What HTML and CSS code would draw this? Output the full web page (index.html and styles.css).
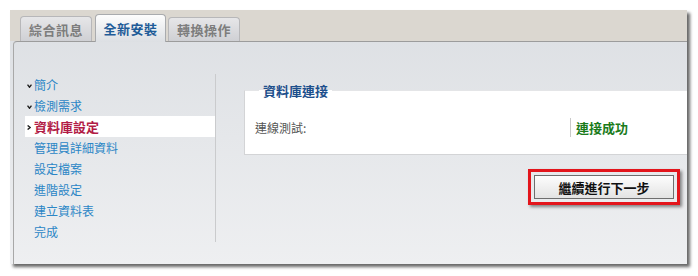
FILE: index.html
```html
<!DOCTYPE html>
<html lang="zh-Hant">
<head>
    <meta charset="UTF-8" />
    <title>安裝精靈</title>
    <link rel="stylesheet" href="styles.css">
</head>
<body>

<!-- ===== Installer window ===== -->
<div class="window">

    <!-- ────────── Tabs ────────── -->
    <div class="tabs">
        <span class="tab">綜合訊息</span>
        <span class="tab active">全新安裝</span>
        <span class="tab">轉換操作</span>
    </div>

    <!-- ────────── Panel ────────── -->
    <div class="panel">
        <ul class="steps">
            <li class="step done"><span class="mark"><svg viewBox="0 0 5 4"><polyline points="0.5,0.6 2.5,3.2 4.5,0.6" /></svg></span>簡介</li>
            <li class="step done"><span class="mark"><svg viewBox="0 0 5 4"><polyline points="0.5,0.6 2.5,3.2 4.5,0.6" /></svg></span>檢測需求</li>
            <li class="step current"><span class="mark"><svg viewBox="0 0 4 5"><polyline points="0.6,0.5 3.2,2.5 0.6,4.5" /></svg></span>資料庫設定</li>
            <li class="step"><span class="mark"></span>管理員詳細資料</li>
            <li class="step"><span class="mark"></span>設定檔案</li>
            <li class="step"><span class="mark"></span>進階設定</li>
            <li class="step"><span class="mark"></span>建立資料表</li>
            <li class="step"><span class="mark"></span>完成</li>
        </ul>

        <div class="content">
            <fieldset class="box">
                <legend>資料庫連接</legend>
                <div class="row">
                    <span class="label">連線測試:</span>
                    <span class="value ok">連接成功</span>
                </div>
            </fieldset>

            <div class="actions">
                <div class="highlight">
                    <button class="btn">繼續進行下一步</button>
                </div>
            </div>
        </div>
    </div>
</div>

</body>
</html>
```

FILE: styles.css
```css
* { box-sizing: border-box; }

body {
    margin: 0;
    background: #fff;
    font-family: "Noto Sans CJK TC", "Noto Sans", sans-serif;
    font-size: 12px;
}

/* ─────────── Window frame ─────────── */
.window{
    margin:10px;
    width:677px;
    height:254px;
    display:flex;
    flex-direction:column;
    background:linear-gradient(#dcdfe3, #eeeff1);
    box-shadow:3px 3px 3px rgba(0,0,0,.6);
}

/* ────────── Tabs ────────── */
.tabs{
    height:31px;
    flex:none;
    display:flex;
    align-items:flex-end;
    gap:2px;
    padding-left:10px;
    background:#dbd7d0;
}
.tab{
    width:72px;
    height:25px;
    display:flex;
    align-items:center;
    justify-content:center;
    border:1px solid #b7b7b9;
    border-bottom:none;
    border-radius:4px 4px 0 0;
    background:linear-gradient(#e6e6e8, #cfd0d4);
    color:#7d7d7d;
    font-size:13px;
    font-weight:700;
    letter-spacing:.5px;
}
.tab:first-child{ margin-right:1px; }
.tab.active{
    position:relative;
    width:71px;
    height:28px;
    margin-bottom:-1px;
    border-color:#a9abae;
    background:linear-gradient(#fdfdfd, #dcdfe3);
    color:#1f5c98;
}
.tab:last-child{ height:24px; }

/* ────────── Panel ────────── */
.panel{
    flex:1;
    display:flex;
    margin-left:3px;
    border-top:1px solid #9c9c9c;
    border-left:1px solid #a8a8a8;
    border-top-left-radius:4px;
}

/* ────────── Step list ────────── */
.steps{
    list-style:none;
    margin:32px 0 0 11px;
    padding:0;
    width:191px;
    height:168px;
    border-right:1px solid #cacbcd;
}
.step{
    height:21px;
    display:flex;
    align-items:center;
    color:#2b86c6;
    font-size:12px;
}
.step .mark{
    width:9px;
    flex:none;
    display:flex;
    align-items:center;
    padding:3px 0 0 2px;
}
.step svg{
    display:block;
    width:5px;
    height:4px;
    fill:none;
    stroke:#1e1e1e;
    stroke-width:1.4;
}
.step.current .mark{ padding-top:1px; }
.step.current{
    background:#fff;
    color:#b21c46;
    font-weight:700;
    font-size:13px;
}
.step.current svg{
    width:4px;
    height:5px;
}

/* ────────── Content ────────── */
.content{
    flex:1;
    display:flex;
    flex-direction:column;
    padding-left:28px;
}
.box{
    margin:39px 0 0;
    padding:0 10px 17px;
    border:1px solid #d3d4d6;
    border-right:none;
    border-top-color:#e4e5e7;
    background:#fff;
}
.box legend{
    margin-left:4px;
    padding:0 4px;
    color:#1d4f8c;
    font-size:13px;
    font-weight:700;
}
.row{
    display:flex;
    align-items:center;
    margin-top:17px;
    height:20px;
}
.row .label{
    width:315px;
    color:#555;
}
.row .value{
    height:19px;
    display:flex;
    align-items:center;
    border-left:1px solid #c9c9c9;
    padding-left:5px;
}
.ok{
    color:#1b7b1b;
    font-weight:700;
    font-size:13px;
}

/* ────────── Button ────────── */
.actions{
    display:flex;
    justify-content:flex-end;
    margin-top:14px;
    padding-right:7px;
}
.highlight{
    border:3px solid #e3151c;
    padding:3px;
    box-shadow:2px 2px 3px rgba(0,0,0,.45);
}
.btn{
    display:block;
    width:140px;
    height:24px;
    border:1px solid #6e6e6e;
    background:linear-gradient(#fdfdfd, #e3e3e3);
    font-family:inherit;
    font-size:13px;
    font-weight:700;
    color:#111;
    padding:0;
}
```
